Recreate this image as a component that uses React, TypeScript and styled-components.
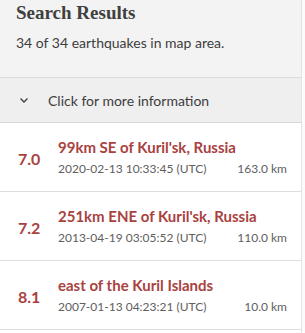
import React from 'react'
import styled, { createGlobalStyle } from 'styled-components'

type QuakeType = {
    mag: string
    place: string
    time: string
    depth: string
}

const quakes: Array<QuakeType> = [
    { mag: '7.0', place: "99km SE of Kuril'sk, Russia", time: '2020-02-13 10:33:45 (UTC)', depth: '163.0 km' },
    { mag: '7.2', place: "251km ENE of Kuril'sk, Russia", time: '2013-04-19 03:05:52 (UTC)', depth: '110.0 km' },
    { mag: '8.1', place: 'east of the Kuril Islands', time: '2007-01-13 04:23:21 (UTC)', depth: '10.0 km' },
]

const GlobalStyle = createGlobalStyle`
    html, body {
        margin: 0;
        padding: 0;
        background: #ffffff;
    }
    body {
        font-family: Lato, "Open Sans", sans-serif;
    }
`

const Panel = styled.div`
    width: 305px; height: 333px;
    overflow-y: scroll;
    background: #fbfbfb;
    &::-webkit-scrollbar {
        width: 4px;
    }
    &::-webkit-scrollbar-track {
        background: #f4f4f4;
    }
    &::-webkit-scrollbar-thumb {
        background: #b9b9b9;
    }
`

const Inner = styled.div`
    margin-right: 3px;
    border-right: 1px solid #e4e4e4;
    padding-bottom: 66px;
    background: #ffffff;
`

const Header = styled.div`
    background: #f3f3f3;
    padding: 1px 16px 0;
    height: 76px;
    border-bottom: 1px solid #dcdcdc;
`

const Title = styled.h2`
    margin: 0;
    font-family: "Liberation Serif", serif;
    font-weight: bold;
    font-size: 19px;
    line-height: 24px;
    color: #404040;
`

const Subtitle = styled.div`
    margin-top: 9px;
    font-size: 14px;
    color: #3d3d3d;
`

const InfoRow = styled.div`
    display: flex;
    align-items: center;
    gap: 19px;
    height: 44px;
    padding-left: 19px;
    background: #efefef;
    border-bottom: 1px solid #d8d8d8;
    font-size: 14px;
    color: #3d3d3d;
    cursor: pointer;
`

const Item = styled.div`
    display: flex;
    align-items: center;
    height: 68px;
    padding: 0 14px 0 18px;
    border-bottom: 1px solid #dedede;
`

const Mag = styled.div`
    width: 40px;
    flex-shrink: 0;
    padding-top: 2px;
    font-size: 16px;
    font-weight: bold;
    color: #a8423f;
`

const Details = styled.div`
    flex-grow: 1;
    display: flex;
    flex-direction: column;
    gap: 5px;
`

const Place = styled.div`
    font-size: 15px;
    font-weight: bold;
    color: #a8423f;
`

const Meta = styled.div`
    display: flex;
    justify-content: space-between;
    white-space: nowrap;
    font-size: 12px;
    line-height: 16px;
    color: #606060;
`

const Chevron = () => (
    <svg width='10' height='8' viewBox='0 0 10 8'>
        <path d='M1.5 2.5 L5 6 L8.5 2.5' fill='none' stroke='#444' strokeWidth='1.4' />
    </svg>
)

const App: React.FC = () => {
    return (
        <>
            <GlobalStyle />
            <Panel>
                <Inner>
                    <Header>
                        <Title>Search Results</Title>
                        <Subtitle>34 of 34 earthquakes in map area.</Subtitle>
                    </Header>
                    <InfoRow>
                        <Chevron />
                        <span>Click for more information</span>
                    </InfoRow>
                    {
                        quakes.map((quake, index) => (
                            <Item key={index}>
                                <Mag>{quake.mag}</Mag>
                                <Details>
                                    <Place>{quake.place}</Place>
                                    <Meta>
                                        <span>{quake.time}</span>
                                        <span>{quake.depth}</span>
                                    </Meta>
                                </Details>
                            </Item>
                        ))
                    }
                </Inner>
            </Panel>
        </>
    )
}

export default App
